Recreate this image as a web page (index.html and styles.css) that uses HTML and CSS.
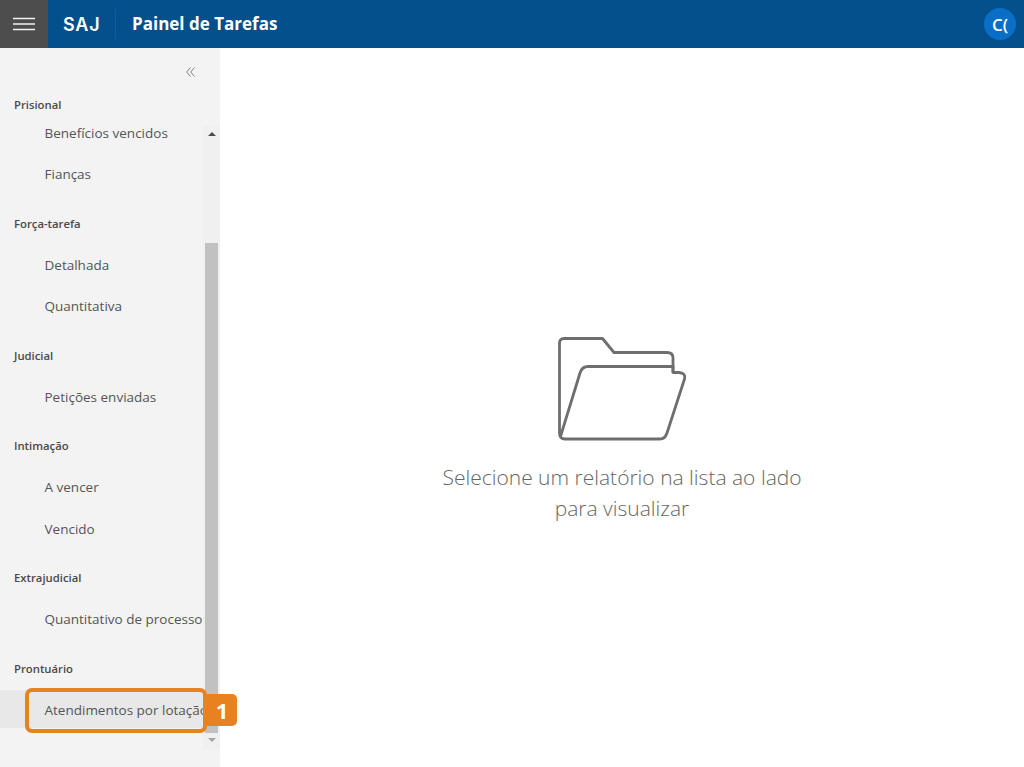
FILE: index.html
```html
<!DOCTYPE html>
<html lang="pt-BR">
<head>
<meta charset="utf-8">
<title>Painel de Tarefas</title>
<link rel="stylesheet" href="styles.css">
</head>
<body>
<header class="topbar">
  <button class="menu-btn" aria-label="Menu">
    <svg width="22" height="14" viewBox="0 0 22 14"><path d="M0 1.5H22M0 7H22M0 12.5H22" stroke="#f2f2f2" stroke-width="1.4" fill="none"/></svg>
  </button>
  <span class="logo">SAJ</span>
  <span class="divider"></span>
  <h1 class="title">Painel de Tarefas</h1>
  <span class="avatar">C(</span>
</header>
<div class="layout">
  <aside class="sidebar">
    <div class="collapse">
      <svg width="9" height="10" viewBox="0 0 9 10"><path d="M4.5 .5L.7 5L4.5 9.5M8.5 .5L4.7 5L8.5 9.5" stroke="#808080" stroke-width="1" fill="none"/></svg>
    </div>
    <nav class="nav">
      <section class="group">
        <h2 class="group-label group-label-first">Prisional</h2>
        <a class="item">Benefícios vencidos</a>
        <a class="item">Fianças</a>
      </section>
      <section class="group">
        <h2 class="group-label">Força-tarefa</h2>
        <a class="item">Detalhada</a>
        <a class="item">Quantitativa</a>
      </section>
      <section class="group">
        <h2 class="group-label">Judicial</h2>
        <a class="item">Petições enviadas</a>
      </section>
      <section class="group">
        <h2 class="group-label">Intimação</h2>
        <a class="item">A vencer</a>
        <a class="item">Vencido</a>
      </section>
      <section class="group">
        <h2 class="group-label">Extrajudicial</h2>
        <a class="item">Quantitativo de processo</a>
      </section>
      <section class="group">
        <h2 class="group-label">Prontuário</h2>
        <a class="item item-active">Atendimentos por lotação</a>
      </section>
    </nav>
    <div class="scrollbar">
      <span class="arrow arrow-up"></span>
      <span class="thumb"></span>
      <span class="arrow arrow-down"></span>
    </div>
    <div class="callout"><span class="callout-badge">1</span></div>
  </aside>
  <main class="main">
    <svg class="folder" width="128" height="104" viewBox="0 0 128 104" fill="none" stroke="#6e6e6e" stroke-width="2.8" stroke-linejoin="round">
      <path d="M1.5 96V6Q1.5 1.5 6 1.5H44.5L56 15.5H109Q115 15.5 115 21V35.5"/>
      <path d="M2.5 99.5L22 36Q24 29.5 30 29.5H115V35.5H121Q128 36 126.5 42L109 96Q107 102 102 102H7Q1.5 102 1.5 96"/>
    </svg>
    <p class="empty">Selecione um relatório na lista ao lado<br>para visualizar</p>
  </main>
</div>
</body>
</html>
```
FILE: styles.css
```css
* { box-sizing: border-box; }
html, body { height: 100%; }
body {
  margin: 0;
  overflow: hidden;
  background: #fff;
  font-family: "Open Sans", "Liberation Sans", sans-serif;
}
.topbar {
  display: flex;
  align-items: center;
  height: 48px;
  background: #03508c;
  color: #fff;
}
.menu-btn {
  display: flex;
  align-items: center;
  justify-content: center;
  width: 48px;
  height: 48px;
  padding: 0;
  border: 0;
  background: #4d4d4d;
}
.logo {
  width: 52px;
  margin-left: 15px;
  font-family: Inter, "Noto Sans", sans-serif;
  font-size: 18px;
  font-weight: 600;
  letter-spacing: .8px;
}
.divider {
  width: 1px;
  height: 30px;
  margin-right: 16px;
  background: #0b5d9e;
}
.title {
  margin: 0 0 2px;
  font-size: 17px;
  font-weight: 700;
}
.avatar {
  display: flex;
  align-items: center;
  justify-content: center;
  width: 32px;
  height: 32px;
  margin-left: auto;
  margin-right: 8px;
  border-radius: 50%;
  background: #0a6ec7;
  font-size: 17px;
  font-weight: 600;
}
.layout {
  display: flex;
  height: 719px;
}
.sidebar {
  position: relative;
  flex: 0 0 220px;
  background: #f3f3f3;
}
.collapse {
  display: flex;
  justify-content: flex-end;
  align-items: center;
  height: 48px;
  padding-right: 25px;
}
.nav {
  width: 205px;
  overflow: hidden;
  white-space: nowrap;
}
.group {
  display: flex;
  flex-direction: column;
}
.group-label {
  display: flex;
  align-items: center;
  height: 40px;
  margin: 9px 0 0;
  padding-left: 14px;
  font-size: 11.3px;
  font-weight: 600;
  color: #4a4a4a;
}
.group-label-first {
  height: 17px;
  margin: 0 0 -2px;
}
.item {
  display: flex;
  align-items: center;
  height: 38px;
  margin: 2.25px 0 1.25px;
  padding-left: 44.5px;
  padding-top: 1px;
  font-size: 13.5px;
  color: #555;
}
.item-active { background: #e8e8e8; }
.scrollbar {
  position: absolute;
  top: 78px;
  left: 203px;
  width: 17px;
  height: 624px;
  display: flex;
  flex-direction: column;
  align-items: center;
  background: #f0f0f0;
}
.arrow {
  flex: none;
  width: 0;
  height: 0;
  border-left: 4px solid transparent;
  border-right: 4px solid transparent;
}
.arrow-up {
  margin-top: 6px;
  border-bottom: 4px solid #4a4a4a;
}
.arrow-down {
  margin-top: 5px;
  border-top: 4px solid #a3a3a3;
}
.thumb {
  flex: none;
  width: 13px;
  height: 490px;
  margin-top: 107px;
  background: #c1c1c1;
}
.callout {
  position: absolute;
  top: 640px;
  left: 25px;
  width: 182px;
  height: 45px;
  border: 4px solid #e8811f;
  border-radius: 7px;
}
.callout-badge {
  position: absolute;
  top: 2px;
  left: 178px;
  display: flex;
  align-items: center;
  justify-content: center;
  width: 30px;
  height: 32px;
  border-radius: 0 5px 5px 0;
  background: #e8811f;
  color: #fff;
  font-size: 22px;
  font-weight: 700;
}
.main {
  flex: 1;
  display: flex;
  flex-direction: column;
  align-items: center;
  padding-top: 289px;
}
.folder { display: block; }
.empty {
  margin: 21px 0 0;
  text-align: center;
  font-size: 21px;
  font-weight: 300;
  line-height: 31px;
  color: #666;
}
```
